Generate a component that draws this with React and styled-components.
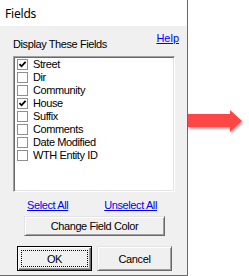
import styled, { createGlobalStyle } from 'styled-components';

const GlobalStyle = createGlobalStyle`
  html, body {
    margin: 0;
    padding: 0;
    background: #ffffff;
  }
`;

const FIELDS = [
  { name: 'Street', checked: true },
  { name: 'Dir', checked: false },
  { name: 'Community', checked: false },
  { name: 'House', checked: true },
  { name: 'Suffix', checked: false },
  { name: 'Comments', checked: false },
  { name: 'Date Modified', checked: false },
  { name: 'WTH Entity ID', checked: false },
];

const StyledScreen = styled.div`
  display: flex;
  align-items: flex-start;
  width: 249px;
  height: 276px;
  overflow: hidden;
  font-family: 'Liberation Sans', Arial, sans-serif;
  font-size: 11px;
  letter-spacing: -0.4px;
  color: #000000;
`;

const StyledDialog = styled.section`
  display: flex;
  flex-direction: column;
  width: 187px;
  height: 275px;
  border-right: 1px solid #6a6a6a;
  border-bottom: 1px solid #6a6a6a;
  background-color: #f0f0f0;
`;

const StyledTitleBar = styled.header`
  display: flex;
  align-items: center;
  flex-shrink: 0;
  height: 26px;
  padding: 1px 0 0 5px;
  box-sizing: border-box;
  background-color: #ffffff;
  font-family: 'Segoe UI', 'Noto Sans', sans-serif;
  font-size: 12px;
  letter-spacing: -0.2px;
`;

const StyledBody = styled.div`
  display: flex;
  flex-direction: column;
  padding: 0 12px 0 13px;
`;

const StyledHeader = styled.div`
  display: flex;
  justify-content: space-between;
  align-items: flex-start;
  height: 30px;
  box-sizing: border-box;
  padding-top: 6px;
  line-height: 13px;
`;

const StyledLabel = styled.span`
  margin-top: 6px;
`;

const StyledLink = styled.a`
  color: #0000ff;
  text-decoration: underline;
  line-height: 13px;
  letter-spacing: ${({ $tight }) => ($tight ? '-0.4px' : '0')};
  margin-right: ${({ $offset }) => $offset || 0}px;
  cursor: pointer;
`;

const StyledList = styled.ul`
  margin: 0;
  padding: 1px 0 0 1px;
  list-style: none;
  height: 136px;
  box-sizing: border-box;
  border: 1px solid;
  border-color: #a0a0a0 #ffffff #ffffff #a0a0a0;
  box-shadow: inset 1px 1px #696969, inset -1px -1px #e3e3e3;
  background-color: #ffffff;
`;

const StyledItem = styled.li`
  display: flex;
  align-items: center;
  gap: 5px;
  height: 13px;
  padding-left: 2px;
  line-height: 13px;
`;

const StyledCheck = styled.span`
  display: flex;
  width: 11px;
  height: 11px;
  box-sizing: border-box;
  border: 1px solid #8f8f8f;
  background-color: #ffffff;
`;

const StyledLinks = styled.div`
  display: flex;
  gap: 36px;
  padding-left: 14px;
  margin-top: 7px;
  height: 13px;
`;

const StyledButton = styled.button`
  position: relative;
  display: flex;
  align-items: center;
  justify-content: center;
  width: ${({ $width }) => $width}px;
  height: ${({ $height }) => $height}px;
  padding: 0;
  border: 1px solid;
  border-color: ${({ $primary }) =>
    $primary ? '#000000' : '#e3e3e3 #696969 #696969 #e3e3e3'};
  box-shadow: ${({ $primary }) =>
    $primary
      ? 'inset 1px 1px #ffffff, inset -1px -1px #696969, inset -2px -2px #a0a0a0'
      : 'inset 1px 1px #ffffff, inset -1px -1px #a0a0a0'};
  background-color: #f0f0f0;
  font: inherit;
  font-size: 11px;
  letter-spacing: -0.4px;
  color: #000000;
`;

const StyledFocus = styled.span`
  position: absolute;
  inset: 3px;
  border: 1px dotted #000000;
`;

const StyledCentered = styled.div`
  display: flex;
  justify-content: center;
  gap: 5px;
  margin-top: ${({ $top }) => $top}px;
  padding-left: 1px;
`;

const StyledArrow = styled.svg`
  display: block;
  margin-top: 108px;
  flex-shrink: 0;
`;

function CheckMark() {
  return (
    <svg width='9' height='9' viewBox='0 0 9 9'>
      <path d='M1.5 4.2 L3.5 6.3 L7.6 1.8' fill='none' stroke='#000' strokeWidth='1.8' />
    </svg>
  );
}

function App() {
  return (
    <>
      <GlobalStyle />
      <StyledScreen>
        <StyledDialog>
          <StyledTitleBar>Fields</StyledTitleBar>
          <StyledBody>
            <StyledHeader>
              <StyledLabel>Display These Fields</StyledLabel>
              <StyledLink $offset={-4}>Help</StyledLink>
            </StyledHeader>
            <StyledList>
              {FIELDS.map((field) => (
                <StyledItem key={field.name}>
                  <StyledCheck>{field.checked && <CheckMark />}</StyledCheck>
                  {field.name}
                </StyledItem>
              ))}
            </StyledList>
            <StyledLinks>
              <StyledLink $tight>Select All</StyledLink>
              <StyledLink $tight>Unselect All</StyledLink>
            </StyledLinks>
            <StyledCentered $top={4}>
              <StyledButton $width={141} $height={20}>Change Field Color</StyledButton>
            </StyledCentered>
            <StyledCentered $top={10}>
              <StyledButton $width={75} $height={25} $primary>
                OK
                <StyledFocus />
              </StyledButton>
              <StyledButton $width={75} $height={25}>Cancel</StyledButton>
            </StyledCentered>
          </StyledBody>
        </StyledDialog>
        <StyledArrow width='58' height='28' viewBox='0 0 58 28'>
          <defs>
            <filter id='shadow' x='-10%' y='-20%' width='130%' height='160%'>
              <feDropShadow dx='1' dy='2' stdDeviation='1.2' floodColor='#000' floodOpacity='0.35' />
            </filter>
          </defs>
          <polygon
            points='0,6 42,6 42,2 54,13 42,24 42,19 0,19'
            fill='#fd4646'
            filter='url(#shadow)'
          />
        </StyledArrow>
      </StyledScreen>
    </>
  );
}

export default App;
